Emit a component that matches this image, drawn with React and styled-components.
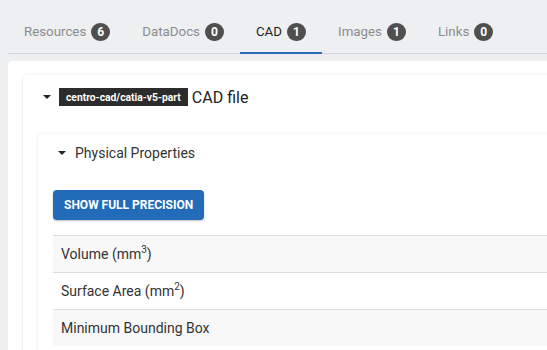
import React from "react";
import styled, { createGlobalStyle } from "styled-components";

const Global = createGlobalStyle`
  html, body { margin: 0; padding: 0; }
  body {
    background: #eeeff1;
    font-family: Roboto, "Liberation Sans", Arial, sans-serif;
    overflow: hidden;
    width: 547px;
    height: 350px;
  }
`;

const Page = styled.div`
  padding-top: 10px;
`;

const TabBar = styled.div`
  display: flex;
  margin-left: 8px;
  height: 43px;
  border-bottom: 1px solid #d3d5d8;
`;

const Tab = styled.div`
  box-sizing: border-box;
  height: 44px;
  margin-bottom: -1px;
  padding: 1px 16px 0;
  display: flex;
  align-items: center;
  gap: 5px;
  font-size: 13.3px;
  color: ${(p) => (p.$active ? "#1f1f1f" : "#8a8c90")};
  border-bottom: 2px solid ${(p) => (p.$active ? "#2a6ebb" : "transparent")};
`;

const Badge = styled.span`
  display: inline-flex;
  align-items: center;
  justify-content: center;
  min-width: 19px;
  height: 18px;
  border-radius: 9px;
  background: #4f4f4f;
  color: #fff;
  font-size: 12px;
  font-weight: 700;
`;

const Panel = styled.div`
  margin: 7px -40px 0 8px;
  background: #fff;
  border-radius: 4px;
  padding: 14px 0 0 15px;
  height: 400px;
`;

const Card = styled.div`
  background: #fff;
  border-radius: 4px;
  box-shadow: 0 0 3px rgba(0, 0, 0, 0.1), 0 1px 2px rgba(0, 0, 0, 0.06);
  padding: 0 0 0 ${(p) => p.$pad}px;
  height: 100%;
`;

const Header = styled.div`
  display: flex;
  align-items: center;
  height: ${(p) => p.$h}px;
  color: #222;
`;

const Caret = styled.span`
  width: 0;
  height: 0;
  border-left: 4px solid transparent;
  border-right: 4px solid transparent;
  border-top: 4px solid #222;
  margin-right: ${(p) => p.$gap}px;
`;

const Label = styled.span`
  display: inline-flex;
  align-items: center;
  height: 18px;
  padding: 0 7px;
  background: #2c2c2c;
  color: #fff;
  font-size: 10.3px;
  font-weight: 700;
  margin-right: 4px;
`;

const Title = styled.span`
  font-size: 16px;
  color: #222;
`;

const SubTitle = styled.span`
  font-size: 14px;
  color: #333;
`;

const InnerWrap = styled.div`
  margin-top: 15px;
  margin-left: -5px;
  height: 300px;
`;

const InnerCard = styled.div`
  background: #fff;
  border-radius: 4px;
  box-shadow: 0 0 3px rgba(0, 0, 0, 0.1), 0 1px 2px rgba(0, 0, 0, 0.06);
  padding-left: 20px;
  height: 100%;
`;

const Body = styled.div`
  margin-left: -5px;
  padding-top: 18px;
`;

const Button = styled.button`
  height: 30px;
  padding: 0 11px;
  border: none;
  border-radius: 4px;
  background: #226bb8;
  color: #fff;
  font-family: Roboto, "Liberation Sans", Arial, sans-serif;
  font-size: 12px;
  font-weight: 700;
  text-transform: uppercase;
  box-shadow: 0 1px 2px rgba(0, 0, 0, 0.25);
  cursor: pointer;
`;

const Table = styled.div`
  margin-top: 15px;
  display: flex;
  flex-direction: column;
`;

const Row = styled.div`
  height: 37px;
  box-sizing: border-box;
  border-top: 1px solid #dddddd;
  background: ${(p) => (p.$alt ? "#f8f8f8" : "#fff")};
  display: flex;
  align-items: center;
  padding-left: 8px;
  font-size: 14px;
  color: #333;

  sup {
    font-size: 10px;
    line-height: 0;
  }
`;

const tabs = [
  { name: "Resources", count: 6 },
  { name: "DataDocs", count: 0 },
  { name: "CAD", count: 1, active: true },
  { name: "Images", count: 1 },
  { name: "Links", count: 0 },
];

export default function App() {
  return (
    <Page>
      <Global />
      <TabBar>
        {tabs.map((t) => (
          <Tab key={t.name} $active={t.active}>
            {t.name}
            <Badge>{t.count}</Badge>
          </Tab>
        ))}
      </TabBar>
      <Panel>
        <Card $pad={20}>
          <Header $h={44}>
            <Caret $gap={8} />
            <Label>centro-cad/catia-v5-part</Label>
            <Title>CAD file</Title>
          </Header>
          <InnerWrap>
            <InnerCard>
              <Header $h={38}>
                <Caret $gap={9} />
                <SubTitle>Physical Properties</SubTitle>
              </Header>
              <Body>
                <Button>Show full precision</Button>
                <Table>
                  <Row $alt>
                    <span>
                      Volume (mm<sup>3</sup>)
                    </span>
                  </Row>
                  <Row>
                    <span>
                      Surface Area (mm<sup>2</sup>)
                    </span>
                  </Row>
                  <Row $alt>
                    <span>Minimum Bounding Box</span>
                  </Row>
                </Table>
              </Body>
            </InnerCard>
          </InnerWrap>
        </Card>
      </Panel>
    </Page>
  );
}
